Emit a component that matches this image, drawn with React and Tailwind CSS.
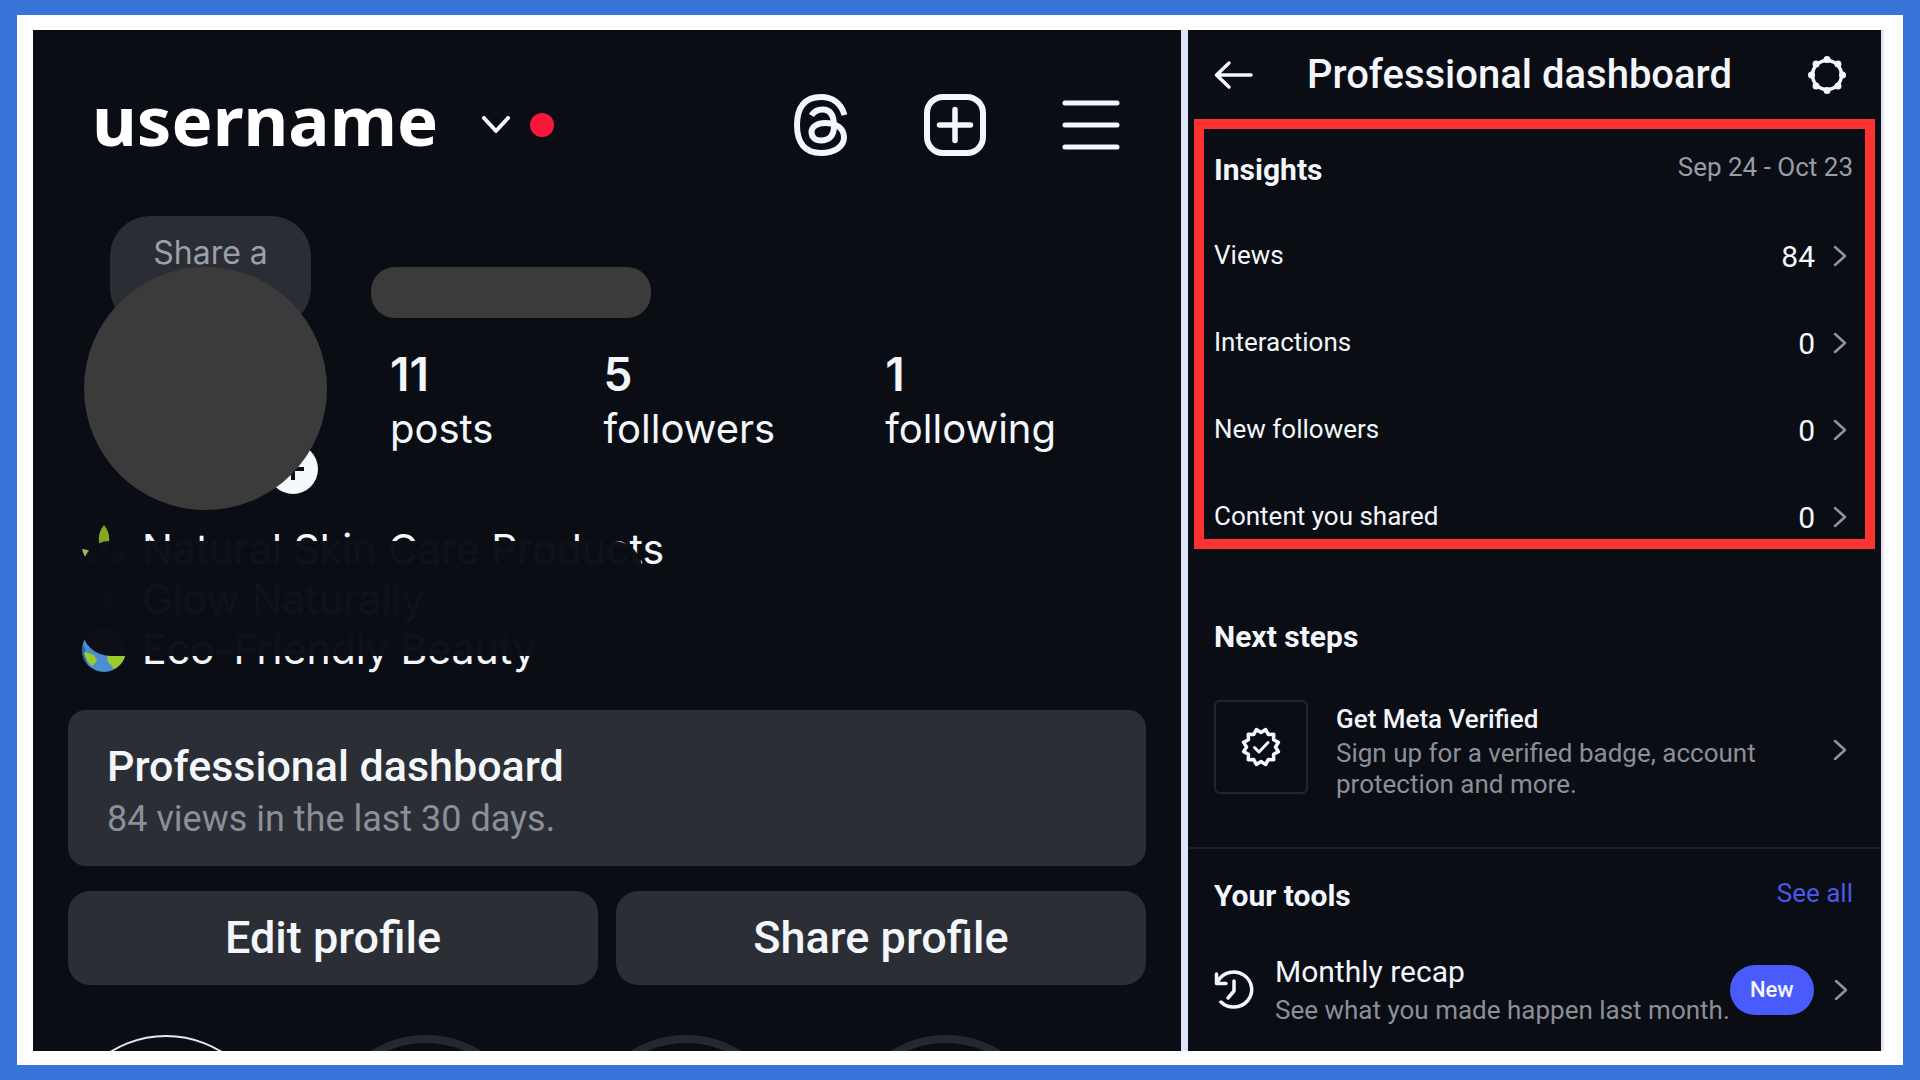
import React from 'react';

const stats = [
  { value: '11', label: 'posts' },
  { value: '5', label: 'followers' },
  { value: '1', label: 'following' },
];

const insights = [
  { label: 'Views', value: 84 },
  { label: 'Interactions', value: 0 },
  { label: 'New followers', value: 0 },
  { label: 'Content you shared', value: 0 },
];

// 12 pointed outline for the verified badge
const badgePoints = Array.from({ length: 24 }, (_, i) => {
  const r = i % 2 === 0 ? 18 : 14.5;
  const a = (Math.PI * i) / 12 + Math.PI / 12;
  return `${(20 + r * Math.sin(a)).toFixed(2)},${(20 - r * Math.cos(a)).toFixed(2)}`;
}).join(' ');

const gearBumps = Array.from({ length: 8 }, (_, i) => {
  const a = (Math.PI * i) / 4;
  return { x: 19 + 15.5 * Math.sin(a), y: 19 - 15.5 * Math.cos(a) };
});

const ThreadsIcon = () => (
  <svg width="54" height="62" viewBox="0 0 54 62" fill="none" stroke="currentColor" strokeWidth="6">
    <path d="M50.5 21C47 9 38 3 27 3C11 3 3 13 3 31C3 49 11 59 27 59C41 59 50 52 50 43.500C50 34 42 29 31 29C23 29 17.500 33 17.500 38C17.500 43 21 46.500 27 46.500C35 46.500 40 42 40 32C40 21 36 15.500 28.500 15.500C23.500 15.500 20 17.500 17.500 21.500" />
  </svg>
);

const PlusSquareIcon = () => (
  <svg width="62" height="62" viewBox="0 0 62 62" fill="none" stroke="currentColor" strokeWidth="6" strokeLinecap="round">
    <rect x="3" y="3" width="56" height="56" rx="16" />
    <path d="M31 15.500V46.500M15.500 31H46.500" strokeWidth="5.500" />
  </svg>
);

const MenuIcon = () => (
  <svg width="58" height="50" viewBox="0 0 58 50" fill="none" stroke="currentColor" strokeWidth="5" strokeLinecap="round">
    <path d="M3 3H55M3 25H55M3 47H55" />
  </svg>
);

const ArrowIcon = () => (
  <svg width="39" height="30" viewBox="0 0 39 30" fill="none" stroke="currentColor" strokeWidth="3.500" strokeLinecap="round" strokeLinejoin="round">
    <path d="M15 3L2.500 15L15 27M3 15H37" />
  </svg>
);

const GearIcon = () => (
  <svg width="38" height="38" viewBox="0 0 38 38" fill="currentColor">
    {gearBumps.map((b, i) => (
      <circle key={i} cx={b.x} cy={b.y} r="3.500" />
    ))}
    <circle cx="19" cy="19" r="14.500" fill="none" stroke="currentColor" strokeWidth="3.500" />
  </svg>
);

const Chevron = () => (
  <svg className="shrink-0 text-[#8f939b]" width="14" height="22" viewBox="0 0 14 22" fill="none" stroke="currentColor" strokeWidth="2.500" strokeLinecap="round" strokeLinejoin="round">
    <path d="M2 2L12 11L2 20" />
  </svg>
);

const LeafIcon = () => (
  <svg width="44" height="50" viewBox="0 0 44 50">
    <path d="M22 0C29 9 29 18 22 28C15 18 15 9 22 0Z" fill="#86a81f" />
    <path d="M22 16V40" stroke="#5c7d14" strokeWidth="2" />
    <path d="M0 24C10 25 17 31 20 40C10 41 3 36 0 24Z" fill="#a3b85a" />
    <path d="M44 26C34 26 27 31 24 40C34 41 41 36 44 26Z" fill="#86a81f" />
  </svg>
);

const SparkleIcon = () => (
  <svg width="44" height="44" viewBox="0 0 44 44" fill="#9a7a1c">
    <path d="M28 6L32 18L42 22L32 26L28 38L24 26L14 22L24 18ZM9 24L11 30L17 32L11 34L9 40L7 34L1 32L7 30Z" />
  </svg>
);

const EarthIcon = () => (
  <svg width="44" height="44" viewBox="0 0 44 44">
    <circle cx="22" cy="22" r="22" fill="#4a8fd3" />
    <path d="M1 16A22 22 0 0 0 6 37C3 30 5 24 1 16Z" fill="#2c5fa8" />
    <path d="M3 24L12 27L15 33L10 38A22 22 0 0 1 2 25ZM25 27L36 24L43 28A22 22 0 0 1 32 41L26 34ZM8 8L22 4L26 14L14 20Z" fill="#9ccb2c" />
  </svg>
);

const bio = [
  { icon: <LeafIcon />, text: 'Natural Skin Care Products' },
  { icon: <SparkleIcon />, text: 'Glow Naturally' },
  { icon: <EarthIcon />, text: 'Eco-Friendly Beauty' },
];

const ProfilePanel = () => (
  <section className="min-w-0 overflow-hidden bg-[#0a0d14] px-[35px] pt-[57px]">
    <header className="flex h-[76px] items-center justify-between pr-[26px] pl-6">
      <button type="button" className="flex items-center">
        <span className="pb-3 font-['Noto_Sans',sans-serif] text-[69px] leading-none font-bold text-white">username</span>
        <svg className="ml-11" width="28" height="18" viewBox="0 0 28 18" fill="none" stroke="currentColor" strokeWidth="4" strokeLinecap="round" strokeLinejoin="round">
          <path d="M2 2L14 15L26 2" />
        </svg>
        <span className="ml-5 size-6 rounded-full bg-[#f8173a]" />
      </button>
      <div className="flex items-center gap-[76px]">
        <button type="button" aria-label="Threads"><ThreadsIcon /></button>
        <button type="button" aria-label="Create"><PlusSquareIcon /></button>
        <button type="button" aria-label="Menu"><MenuIcon /></button>
      </div>
    </header>

    <div className="mt-[53px] flex gap-11 pl-4">
      <div className="relative shrink-0 pt-[51px]">
        <div className="absolute top-0 left-[26px] h-28 w-[201px] rounded-[40px] bg-[#2a2d34] pt-[17px] text-center font-[Inter,sans-serif] text-[32px] leading-10 text-[#9b9fa8]">
          Share a
        </div>
        <div className="absolute right-[9px] bottom-4 flex size-[50px] items-center justify-center rounded-full bg-[#f5f8fc]">
          <svg width="22" height="22" viewBox="0 0 22 22" stroke="#0a0d14" strokeWidth="4">
            <path d="M11 0V22M0 11H22" />
          </svg>
        </div>
        <div className="relative size-[243px] rounded-full bg-[#3b3b3b]" />
      </div>
      <div className="pt-[51px]">
        <div className="h-[51px] w-[280px] rounded-[24px] bg-[#3b3b3b]" />
        <div className="mt-[34px] flex gap-[110px] pl-[19px]">
          {stats.map((s) => (
            <div key={s.label} className="font-[Inter,sans-serif]">
              <div className="text-[46px] leading-11 font-semibold">{s.value}</div>
              <div className="mt-[11px] text-[40px] leading-11">{s.label}</div>
            </div>
          ))}
        </div>
      </div>
    </div>

    <div className="relative mt-[15px] pl-[14px]">
      {bio.map((line) => (
        <div key={line.text} className="flex h-[50px] items-center gap-4 font-[Inter,sans-serif] text-[41px]">
          {line.icon}
          <span>{line.text}</span>
        </div>
      ))}
      {/* Covers most of the bio */}
      <div className="absolute top-4 left-[14px] h-[115px] w-[560px] rounded-[28px] bg-[#0a0d14]/98" />
    </div>

    <a href="#dashboard" className="mt-[35px] block rounded-[18px] bg-[#2b2e35] px-[39px] pt-[31px] pb-[25px]">
      <div className="text-[43px] leading-[50px] font-medium">Professional dashboard</div>
      <div className="mt-[6px] text-[36px] leading-11 text-[#8b8f98]">84 views in the last 30 days.</div>
    </a>

    <div className="mt-[25px] flex gap-[18px] text-[45px] font-medium">
      <button type="button" className="h-[94px] flex-1 rounded-[22px] bg-[#2b2e35]">Edit profile</button>
      <button type="button" className="h-[94px] flex-1 rounded-[22px] bg-[#2b2e35]">Share profile</button>
    </div>

    <div className="-ml-2 mt-[50px] flex h-4 gap-12 overflow-hidden">
      <div className="size-[212px] shrink-0 rounded-full border-2 border-[#e4e7ec]" />
      <div className="size-[212px] shrink-0 rounded-full border-8 border-[#25282f]" />
      <div className="size-[212px] shrink-0 rounded-full border-8 border-[#25282f]" />
      <div className="size-[212px] shrink-0 rounded-full border-8 border-[#25282f]" />
    </div>
  </section>
);

const DashboardPanel = () => (
  <section id="dashboard" className="min-w-0 overflow-hidden bg-[#0a0d14]">
    <header className="flex h-[89px] items-center pr-[35px] pl-[26px]">
      <button type="button" aria-label="Back"><ArrowIcon /></button>
      <h1 className="ml-[54px] text-[40px] font-medium">Professional dashboard</h1>
      <button type="button" aria-label="Settings" className="ml-auto"><GearIcon /></button>
    </header>

    <div className="mx-[6px] border-10 border-[#fd3233] px-[10px] pt-5 pb-[2px]">
      <div className="flex h-10 items-center justify-between pr-[2px]">
        <h2 className="text-[30px] font-bold">Insights</h2>
        <span className="pb-1 text-[26px] text-[#989ca3]">Sep 24 - Oct 23</span>
      </div>
      <div className="mt-[47px] flex flex-col gap-[47px]">
        {insights.map((row) => (
          <a key={row.label} href="#insights" className="flex h-10 items-center pr-2">
            <span className="pb-[2px] text-[26px]">{row.label}</span>
            <span className="mr-[18px] ml-auto text-[30px]">{row.value}</span>
            <Chevron />
          </a>
        ))}
      </div>
    </div>

    <div className="px-[26px]">
      <h2 className="mt-[68px] text-[30px] leading-10 font-bold">Next steps</h2>
      <a href="#verified" className="mt-[43px] flex pr-2">
        <span className="flex size-[94px] shrink-0 items-center justify-center rounded-md border-2 border-[#22252d]">
          <svg width="40" height="40" viewBox="0 0 40 40" fill="none" stroke="currentColor" strokeWidth="3.500" strokeLinecap="round" strokeLinejoin="round">
            <polygon points={badgePoints} />
            <path d="M13.500 20.500L18 25L27 15.500" strokeWidth="3" />
          </svg>
        </span>
        <span className="ml-7 w-[430px] pt-1 text-[26px]">
          <span className="block leading-[30px] font-medium">Get Meta Verified</span>
          <span className="mt-1 block leading-[31px] text-[#8b8f98]">Sign up for a verified badge, account protection and more.</span>
        </span>
        <span className="ml-auto self-center"><Chevron /></span>
      </a>
    </div>

    <div className="mt-[47px] border-t-2 border-[#1c1f26] px-[26px] pt-[26px] pb-[25px]">
      <div className="flex h-10 items-center justify-between pr-[2px]">
        <h2 className="text-[30px] font-bold">Your tools</h2>
        <a href="#tools" className="pb-1 text-[26px] text-[#4b57e6]">See all</a>
      </div>
      <a href="#recap" className="mt-[39px] flex items-center pr-2">
        <svg className="shrink-0" width="40" height="40" viewBox="0 0 40 40" fill="none" stroke="currentColor" strokeWidth="3.500" strokeLinecap="round" strokeLinejoin="round">
          <path d="M4 11A18 17.500 0 1 1 7 32" />
          <path d="M2.500 4V13.500H12" />
          <path d="M20 11V21L14 28" />
        </svg>
        <span className="ml-[21px] whitespace-nowrap">
          <span className="block text-[30px] leading-9">Monthly recap</span>
          <span className="mt-[5px] block text-[26px] leading-[30px] text-[#8b8f98]">See what you made happen last month.</span>
        </span>
        <span className="mr-5 ml-auto flex h-[50px] w-[84px] shrink-0 items-center justify-center rounded-full bg-[#4a5bfb] text-[22px] font-medium">New</span>
        <Chevron />
      </a>
    </div>
  </section>
);

const App = () => {
  return (
    <div className="min-h-screen bg-[#3874d8] px-[17px] py-[15px] font-[Roboto,sans-serif] text-[#f3f6fa]">
      <div className="bg-white pt-[15px] pr-[19px] pb-[14px] pl-4">
        <div className="grid grid-cols-[1148fr_693fr] gap-[7px] border-r-3 border-[#e4e6f4] bg-[#dce5f9]">
          <ProfilePanel />
          <DashboardPanel />
        </div>
      </div>
    </div>
  );
};

export default App;
